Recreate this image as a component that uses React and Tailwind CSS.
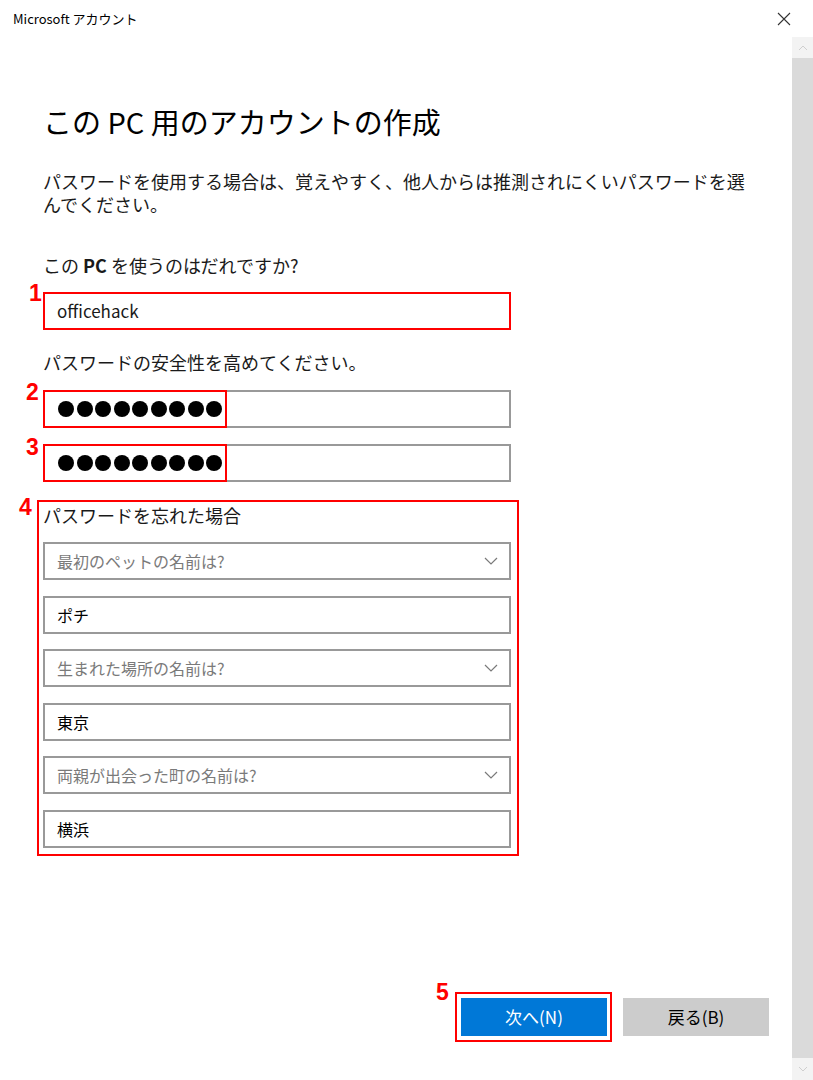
import React from 'react';

const font = { fontFamily: '"Noto Sans CJK JP", "Noto Sans", sans-serif' };

const Num = ({ n, className }) => (
  <span className={`absolute text-[23px] leading-none font-bold text-[#ff0000] ${className}`} style={{ fontFamily: '"Liberation Sans", Arial, sans-serif' }}>{n}</span>
);

const Chevron = () => (
  <svg width="14" height="8" viewBox="0 0 14 8" className="absolute right-[11px] top-1/2 -translate-y-1/2">
    <path d="M1 1 L7 7 L13 1" fill="none" stroke="#7a7a7a" strokeWidth="1.2" />
  </svg>
);

const Field = ({ children, className = '' }) => (
  <div className={`relative w-[468px] h-[38px] border-2 border-[#999999] bg-white flex items-center pl-[12px] text-[16px] ${className}`}>{children}</div>
);

const Dots = () => (
  <div className="flex gap-[2.5px] pl-[1px]">
    {Array.from({ length: 9 }).map((_, i) => <span key={i} className="w-[16px] h-[16px] rounded-full bg-black" />)}
  </div>
);

const App = () => {
  const questions = [
    { q: '最初のペットの名前は?', a: 'ポチ' },
    { q: '生まれた場所の名前は?', a: '東京' },
    { q: '両親が出会った町の名前は?', a: '横浜' },
  ];

  return (
    <div className="w-[813px] h-[1080px] bg-white flex flex-col text-[#1a1a1a] overflow-hidden" style={font}>
      {/* title bar */}
      <div className="h-[37px] flex items-center justify-between pl-[13px] pr-[22px] shrink-0">
        <span className="text-[13px] text-black">Microsoft アカウント</span>
        <svg width="14" height="14" viewBox="0 0 14 14">
          <path d="M1 1 L13 13 M13 1 L1 13" stroke="#333" strokeWidth="1.1" />
        </svg>
      </div>

      <div className="flex flex-1 min-h-0">
        <div className="flex-1 flex flex-col pl-[43px] pb-[44px] pr-[23px]">
          <h1 className="mt-[66px] text-[29px] leading-[36px] font-normal text-black">この PC 用のアカウントの作成</h1>
          <p className="mt-[31px] w-[712px] text-[18px] leading-[23px]">パスワードを使用する場合は、覚えやすく、他人からは推測されにくいパスワードを選んでください。</p>

          <div className="mt-[37px] text-[18px] leading-[24px]">この <span className="font-bold">PC</span> を使うのはだれですか?</div>
          <div className="relative mt-[15px]">
            <Num n="1" className="-left-[14px] -top-[10px]" />
            <Field className="!border-[#ff0000] text-[17px]">officehack</Field>
          </div>

          <div className="mt-[20px] text-[18px] leading-[24px]">パスワードの安全性を高めてください。</div>
          <div className="relative mt-[16px]">
            <Num n="2" className="-left-[17px] -top-[9px]" />
            <Field><Dots /></Field>
            <div className="absolute left-0 top-0 w-[184px] h-[38px] border-2 border-[#ff0000]" />
          </div>
          <div className="relative mt-[16px]">
            <Num n="3" className="-left-[17px] -top-[8px]" />
            <Field><Dots /></Field>
            <div className="absolute left-0 top-0 w-[184px] h-[38px] border-2 border-[#ff0000]" />
          </div>

          <div className="relative mt-[18px] -ml-[6px] w-[482px] border-2 border-[#ff0000] pl-[4px] pb-[6px]">
            <Num n="4" className="-left-[20px] -top-[6px]" />
            <div className="mt-[1px] text-[18px] leading-[24px]">パスワードを忘れた場合</div>
            {questions.map((item, i) => (
              <React.Fragment key={i}>
                <Field className="mt-[15px] text-[#7a7a7a]">{item.q}<Chevron /></Field>
                <Field className="mt-[16px] text-black">{item.a}</Field>
              </React.Fragment>
            ))}
          </div>

          <div className="mt-auto flex justify-end gap-[16px]">
            <div className="relative">
              <Num n="5" className="-left-[25px] -top-[17px]" />
              <div className="absolute -left-[6px] -top-[6px] -right-[5px] -bottom-[6px] border-2 border-[#ff0000]" />
              <button className="w-[146px] h-[38px] bg-[#0078d7] text-white text-[17px]">次へ(N)</button>
            </div>
            <button className="w-[146px] h-[38px] bg-[#cccccc] text-black text-[17px]">戻る(B)</button>
          </div>
        </div>

        {/* scrollbar */}
        <div className="w-[21px] shrink-0 flex flex-col">
          <div className="h-[21px] bg-[#f3f3f3] flex items-center justify-center">
            <svg width="10" height="6" viewBox="0 0 10 6"><path d="M1 5 L5 1 L9 5" fill="none" stroke="#cfcfcf" strokeWidth="1" /></svg>
          </div>
          <div className="flex-1 bg-[#dadada]" />
          <div className="h-[22px] bg-[#f3f3f3] flex items-center justify-center">
            <svg width="10" height="6" viewBox="0 0 10 6"><path d="M1 1 L5 5 L9 1" fill="none" stroke="#cfcfcf" strokeWidth="1" /></svg>
          </div>
        </div>
      </div>
    </div>
  );
};

export default App;
